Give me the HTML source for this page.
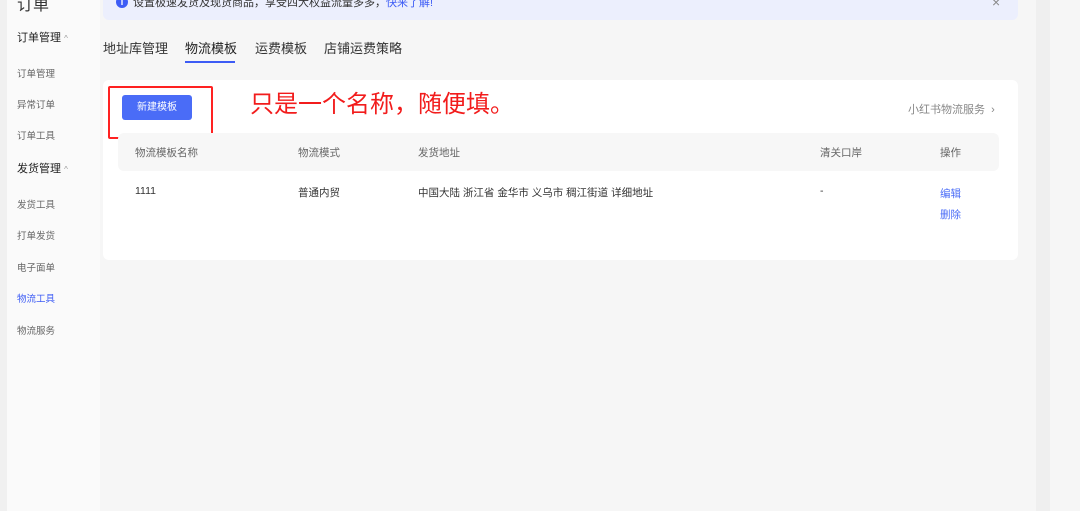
<!DOCTYPE html>
<html><head><meta charset="utf-8"><style>
*{margin:0;padding:0;box-sizing:border-box}
body{width:1080px;height:511px;overflow:hidden;background:#f6f6f6;font-family:"Liberation Sans","Noto Sans CJK SC",sans-serif;position:relative;color:#333}
.a{position:absolute;white-space:nowrap}
.side{position:absolute;left:7px;top:0;width:93px;height:511px;background:#fafafa}
.s{font-size:9.5px;color:#666}
.g{font-size:11px;color:#222}
.t{font-size:10.5px;color:#666}
.r{font-size:10.5px;color:#333}
</style></head><body>
<div class="a" style="left:0;top:0;width:7px;height:511px;background:#f0f0f0"></div>
<div class="side"></div>
<div class="a" style="left:17px;top:-9px;font-size:16px;color:#333">订单</div>
<div class="a g" style="left:17px;top:29px">订单管理 <span style="font-size:8px;color:#999">^</span></div>
<div class="a s" style="left:17px;top:66px">订单管理</div>
<div class="a s" style="left:17px;top:97px">异常订单</div>
<div class="a s" style="left:17px;top:128px">订单工具</div>
<div class="a g" style="left:17px;top:160px">发货管理 <span style="font-size:8px;color:#999">^</span></div>
<div class="a s" style="left:17px;top:197px">发货工具</div>
<div class="a s" style="left:17px;top:228px">打单发货</div>
<div class="a s" style="left:17px;top:260px">电子面单</div>
<div class="a s" style="left:17px;top:291px;color:#3d5cf5">物流工具</div>
<div class="a s" style="left:17px;top:323px">物流服务</div>

<div class="a" style="left:103px;top:-10px;width:915px;height:30px;background:#eceffd;border-radius:6px"></div>
<div class="a" style="left:116px;top:-4px;width:12px;height:12px;border-radius:50%;background:#3d5cf5;color:#fff;font-size:9px;text-align:center;line-height:12px;font-weight:bold">i</div>
<div class="a" style="left:133px;top:-6px;font-size:11px;color:#333">设置极速发货及现货商品，享受四大权益流量多多，<span style="color:#3d5cf5">快来了解!</span></div>
<div class="a" style="left:992px;top:-6px;font-size:14px;color:#888">×</div>

<div class="a" style="left:103px;top:38px;font-size:13px;color:#333">地址库管理</div>
<div class="a" style="left:185px;top:38px;font-size:13px;color:#222">物流模板</div>
<div class="a" style="left:185px;top:61px;width:50px;height:2px;background:#3d5cf5"></div>
<div class="a" style="left:255px;top:38px;font-size:13px;color:#333">运费模板</div>
<div class="a" style="left:324px;top:38px;font-size:13px;color:#333">店铺运费策略</div>

<div class="a" style="left:103px;top:80px;width:915px;height:180px;background:#fff;border-radius:6px"></div>
<div class="a" style="left:122px;top:95px;width:70px;height:25px;background:#4a6cf7;border-radius:3px;color:#fff;font-size:10px;text-align:center;line-height:25px">新建模板</div>
<div class="a" style="left:108px;top:86px;width:105px;height:53px;border:2px solid #f22;border-radius:2px"></div>
<div class="a" style="left:250px;top:90px;font-size:24px;color:#f21c1c;line-height:30px">只是一个名称，随便填。</div>
<div class="a" style="left:908px;top:101px;font-size:11px;color:#888">小红书物流服务 &nbsp;›</div>

<div class="a" style="left:118px;top:133px;width:881px;height:38px;background:#f7f7f7;border-radius:6px"></div>
<div class="a t" style="left:135px;top:145px">物流模板名称</div>
<div class="a t" style="left:298px;top:145px">物流模式</div>
<div class="a t" style="left:418px;top:145px">发货地址</div>
<div class="a t" style="left:820px;top:145px">清关口岸</div>
<div class="a t" style="left:940px;top:145px">操作</div>

<div class="a r" style="left:135px;top:185px">1111</div>
<div class="a r" style="left:298px;top:185px">普通内贸</div>
<div class="a r" style="left:418px;top:185px">中国大陆 浙江省 金华市 义乌市 稠江街道 详细地址</div>
<div class="a r" style="left:820px;top:185px">-</div>
<div class="a r" style="left:940px;top:186px;color:#4a6cf7">编辑</div>
<div class="a r" style="left:940px;top:207px;color:#4a6cf7">删除</div>

<div class="a" style="left:1036px;top:0;width:14px;height:511px;background:#efefef"></div>
<div class="a" style="left:1050px;top:0;width:30px;height:511px;background:#f6f6f6"></div>
</body></html>
